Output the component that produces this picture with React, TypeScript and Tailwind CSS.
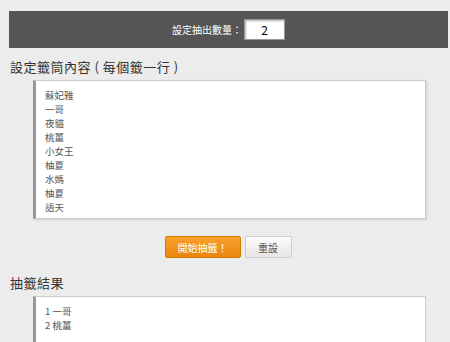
export default function App() {
  const pool = ["蘇妃雅", "一哥", "夜貓", "桃薑", "小女王", "柚夏", "水媽", "柚夏", "語天"];
  const result = ["1 一哥", "2 桃薑"];
  const font = { fontFamily: '"Microsoft JhengHei", "Noto Sans CJK TC", sans-serif' };

  return (
    <div className="w-[450px] h-[342px] overflow-hidden bg-[#ececec] text-[#333]" style={font}>
      <div className="pt-[11px] pl-[9px] pr-[2px]">
        <div className="h-[37px] bg-[#555] flex items-center justify-center gap-[2px]">
          <span className="text-white text-[10px] leading-[12px]">設定抽出數量：</span>
          <div className="w-[41px] h-[21px] bg-white border border-[#999] shadow-[inset_1px_1px_2px_rgba(0,0,0,0.3)] flex items-center justify-center text-[12px] text-black">
            2
          </div>
        </div>
      </div>

      <h2 className="ml-[10px] mt-[10px] text-[13px] leading-[18px] tracking-[0.5px]">設定籤筒內容 ( 每個籤一行 )</h2>

      <div className="ml-[33px] mr-[24px] mt-[4px] h-[139px] bg-white border border-[#ccc] border-l-[3px] border-l-[#999] shadow-[1px_1px_2px_rgba(0,0,0,0.12)] px-[9px] pt-[7px]">
        {pool.map((n, i) => (
          <div key={i} className="text-[9.5px] leading-[14px] text-[#555]">{n}</div>
        ))}
      </div>

      <div className="flex justify-center gap-[4px] mt-[17px] pl-[6px]">
        <button className="w-[76px] h-[22px] rounded-[2px] border border-[#d07a00] bg-gradient-to-b from-[#f9a02a] to-[#e9850a] text-white text-[10px]">
          開始抽籤！
        </button>
        <button className="w-[47px] h-[22px] rounded-[2px] border border-[#ccc] bg-gradient-to-b from-[#fcfcfc] to-[#e6e6e6] text-[#555] text-[10px]">
          重設
        </button>
      </div>

      <h2 className="ml-[10px] mt-[16px] text-[13px] leading-[18px] tracking-[0.5px]">抽籤結果</h2>

      <div className="ml-[33px] mr-[24px] mt-[4px] h-[60px] bg-white border border-[#ccc] border-l-[3px] border-l-[#999] px-[9px] pt-[7px]">
        {result.map((n, i) => (
          <div key={i} className="text-[9.5px] leading-[14px] text-[#555]">{n}</div>
        ))}
      </div>
    </div>
  );
}
